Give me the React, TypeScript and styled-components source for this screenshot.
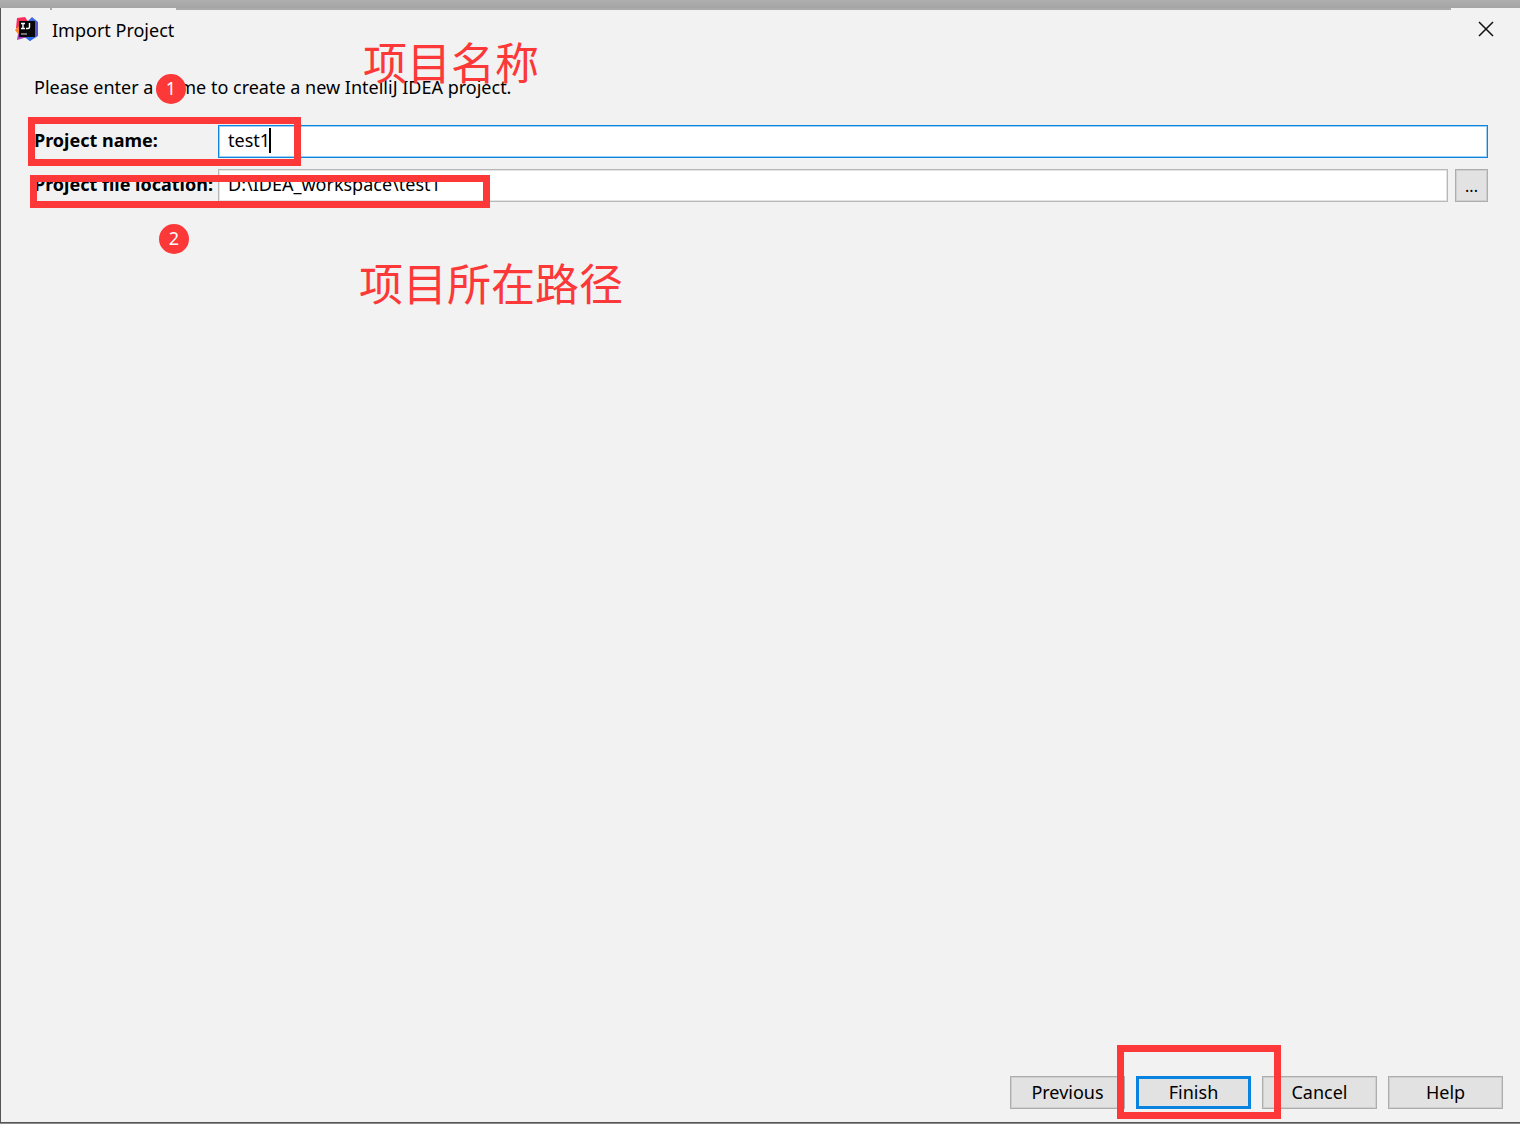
import React, { useState } from "react";
import styled, { createGlobalStyle } from "styled-components";

const RED = "#fc3838";

const GlobalStyle = createGlobalStyle`
  *, *::before, *::after { box-sizing: border-box; }
  body {
    margin: 0;
    background: #acacac;
    color: #000;
    font-family: "Noto Sans", "Noto Sans CJK SC", sans-serif;
    font-size: 18px;
    line-height: 24px;
  }
  input, button { font: inherit; color: inherit; margin: 0; }
`;

const Desktop = styled.div`
  min-height: 100vh;
  display: flex;
  flex-direction: column;
  padding: 8px 0 1px;
  background: linear-gradient(#aeaeae, #a4a4a4 8px, #8c8c8c 8px);
`;

const Dialog = styled.main`
  position: relative;
  flex: 1;
  display: flex;
  flex-direction: column;
  background: #f2f2f2;
  border-left: 1px solid #555;
  border-bottom: 1px solid #555;
`;

const EdgeShadow = styled.span<{ $left: number; $right?: number; $width?: number }>`
  position: absolute;
  top: 0;
  left: ${(p) => p.$left}px;
  right: ${(p) => (p.$right === undefined ? "auto" : `${p.$right}px`)};
  width: ${(p) => (p.$width === undefined ? "auto" : `${p.$width}px`)};
  height: 2px;
  background: #aaa;
`;

const TitleBar = styled.header`
  display: flex;
  align-items: center;
  height: 42px;
  padding: 0 12px 0 14px;
`;

const Title = styled.h1`
  flex: 1;
  margin: 0 0 0 13px;
  padding-top: 2px;
  font-size: 18px;
  line-height: 24px;
  font-weight: 400;
`;

const CloseButton = styled.button`
  display: flex;
  align-items: center;
  justify-content: center;
  width: 44px;
  height: 42px;
  padding: 0;
  border: 0;
  background: transparent;
`;

const Content = styled.section`
  flex: 1;
  padding: 25px 32px 0 33px;
`;

const Intro = styled.p`
  position: relative;
  margin: 0 0 26px;
`;

const Row = styled.div`
  position: relative;
  display: flex;
  align-items: center;
  margin-bottom: 11px;
`;

const Label = styled.label`
  width: 184px;
  flex: none;
  padding-bottom: 3px;
  font-weight: 700;
  white-space: nowrap;
`;

const Field = styled.div`
  position: relative;
  flex: 1;
  display: flex;
`;

const TextInput = styled.input<{ $active?: boolean }>`
  flex: 1;
  min-width: 0;
  height: 33px;
  padding: 0 9px 3px;
  border: 1px solid ${(p) => (p.$active ? "#0f84dc" : "#b8b8b8")};
  box-shadow: inset 0 0 0 1px ${(p) => (p.$active ? "#9fd0f5" : "#e4e4e4")};
  border-radius: 0;
  background: #fff;
  outline: none;
`;

const Caret = styled.span`
  position: absolute;
  left: 51px;
  top: 3px;
  width: 2px;
  height: 25px;
  background: #000;
`;

const PushButton = styled.button<{ $primary?: boolean }>`
  width: 115px;
  height: 33px;
  padding: 0 0 2px;
  border: ${(p) => (p.$primary ? "3px solid #0883df" : "1px solid #adadad")};
  box-shadow: ${(p) => (p.$primary ? "none" : "inset 0 0 0 1px #cfcfcf")};
  background: #e2e2e2;
  line-height: 24px;
`;

const BrowseButton = styled(PushButton)`
  width: 33px;
  margin-left: 7px;
  padding: 0;
  font-size: 16px;
`;

const Footer = styled.footer`
  display: flex;
  justify-content: flex-end;
  gap: 11px;
  padding: 0 17px 13px;
`;

const FinishSlot = styled.div`
  position: relative;
  display: flex;
`;

const Frame = styled.span<{ $x: number; $y: number; $w: number; $h: number }>`
  position: absolute;
  z-index: 1;
  left: ${(p) => p.$x}px;
  top: ${(p) => p.$y}px;
  width: ${(p) => p.$w}px;
  height: ${(p) => p.$h}px;
  border: 7px solid ${RED};
  pointer-events: none;
`;

const Badge = styled.span<{ $x: number; $y: number }>`
  position: absolute;
  z-index: 1;
  left: ${(p) => p.$x}px;
  top: ${(p) => p.$y}px;
  width: 30px;
  height: 30px;
  border-radius: 50%;
  background: ${RED};
  color: #fff;
  line-height: 28px;
  text-align: center;
`;

const Note = styled.span<{ $x: number; $y: number }>`
  position: absolute;
  z-index: 1;
  left: ${(p) => p.$x}px;
  top: ${(p) => p.$y}px;
  color: ${RED};
  font-family: "Noto Sans CJK SC", sans-serif;
  font-size: 44px;
  line-height: 60px;
  white-space: nowrap;
  pointer-events: none;
`;

function IdeaLogo() {
  return (
    <svg width="24" height="26" viewBox="0 0 24 26" aria-hidden="true">
      <path d="M2 2 10 1 14 7 8 17 1 12Z" fill="#fb2d5b" />
      <path d="M0 14 4 10 9 12 6 19 3 18Z" fill="#f98528" />
      <path d="M13 5 17 1 23 6 23 20 15 25 11 22Z" fill="#3f68df" />
      <path d="M20 5 23 7 23 19 18 22Z" fill="#5a58d0" />
      <path d="M3 18 8 17 14 22 9 22 2 24Z" fill="#a541b5" />
      <path d="M10 21h9l-4 4Z" fill="#286de5" />
      <rect x="4" y="5" width="16" height="16" fill="#080808" />
      <path d="M6 7.500h4M8 7.500v5M6 12.500h4M14.500 7v4q0 1.500-1.500 1.500h-2" fill="none" stroke="#fff" strokeWidth="1.4" />
      <path d="M6 18h6" stroke="#ddd" strokeWidth="1" />
    </svg>
  );
}

export default function App() {
  const [name, setName] = useState("test1");
  const [location, setLocation] = useState("D:\\IDEA_workspace\\test1");

  return (
    <>
      <GlobalStyle />
      <Desktop>
        <Dialog>
          <EdgeShadow $left={49} $width={2} />
          <EdgeShadow $left={175} $right={69} />
          <TitleBar>
            <IdeaLogo />
            <Title>Import Project</Title>
            <CloseButton type="button" aria-label="Close">
              <svg width="16" height="16" viewBox="0 0 16 16" aria-hidden="true">
                <path d="M1 1 15 15M15 1 1 15" stroke="#111" strokeWidth="1.5" />
              </svg>
            </CloseButton>
          </TitleBar>
          <Content>
            <Intro>
              Please enter a name to create a new IntelliJ IDEA project.
              <Badge $x={122} $y={-1}>1</Badge>
              <Note $x={329} $y={-44}>项目名称</Note>
            </Intro>
            <Row>
              <Label htmlFor="project-name">Project name:</Label>
              <Field>
                <TextInput
                  id="project-name"
                  $active
                  value={name}
                  onChange={(e) => setName(e.target.value)}
                />
                <Caret />
              </Field>
              <Frame $x={-6} $y={-8} $w={273} $h={49} />
            </Row>
            <Row>
              <Label htmlFor="project-location">Project file location:</Label>
              <Field>
                <TextInput
                  id="project-location"
                  value={location}
                  onChange={(e) => setLocation(e.target.value)}
                />
              </Field>
              <BrowseButton type="button" aria-label="Browse">...</BrowseButton>
              <Frame $x={-4} $y={6} $w={460} $h={33} />
              <Badge $x={125} $y={55}>2</Badge>
              <Note $x={325} $y={83}>项目所在路径</Note>
            </Row>
          </Content>
          <Footer>
            <PushButton type="button">Previous</PushButton>
            <FinishSlot>
              <PushButton type="button" $primary>Finish</PushButton>
              <Frame $x={-19} $y={-31} $w={164} $h={74} />
            </FinishSlot>
            <PushButton type="button">Cancel</PushButton>
            <PushButton type="button">Help</PushButton>
          </Footer>
        </Dialog>
      </Desktop>
    </>
  );
}
